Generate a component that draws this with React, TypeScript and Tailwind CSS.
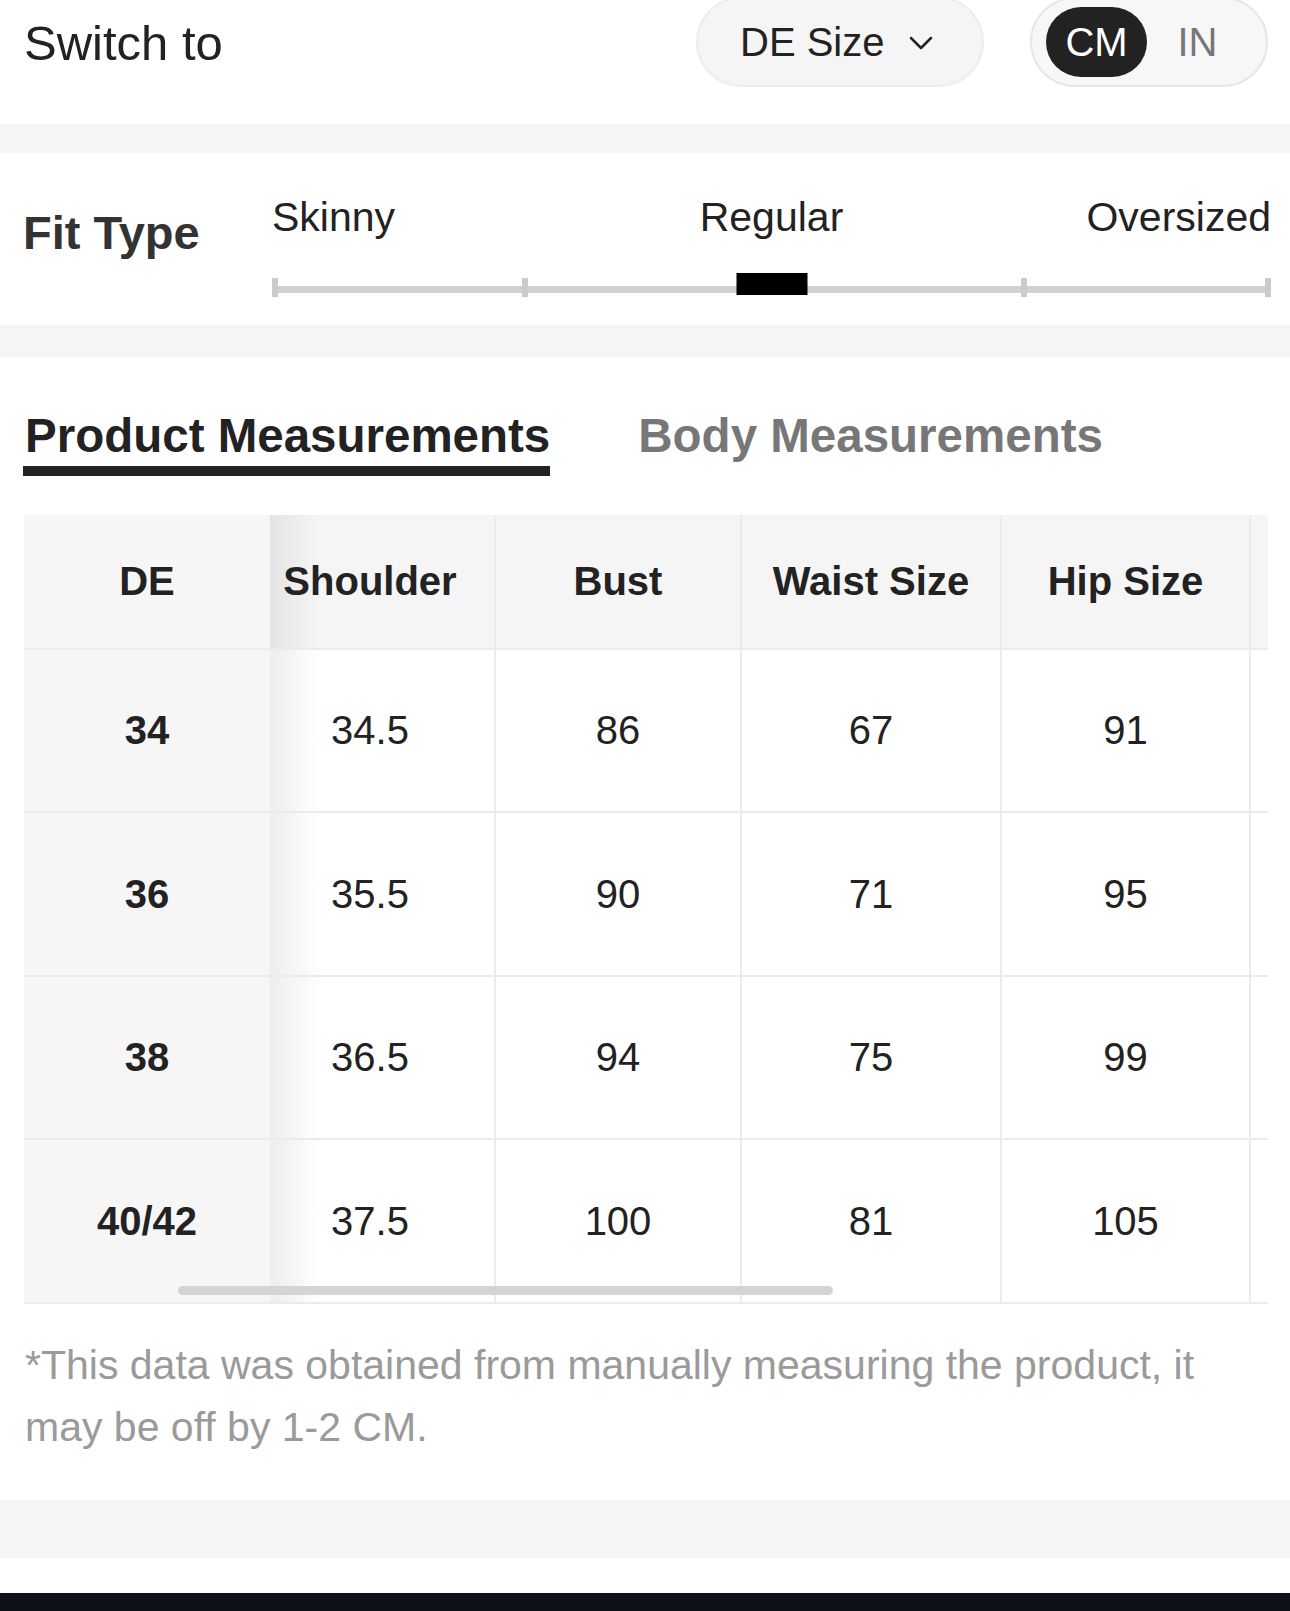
import React from 'react';

const rows = [
    { de: '34', shoulder: '34.5', bust: '86', waist: '67', hip: '91' },
    { de: '36', shoulder: '35.5', bust: '90', waist: '71', hip: '95' },
    { de: '38', shoulder: '36.5', bust: '94', waist: '75', hip: '99' },
    { de: '40/42', shoulder: '37.5', bust: '100', waist: '81', hip: '105' },
];

function Row({ cells, header }: { cells: string[]; header?: boolean }) {
    const weight = header ? 'font-bold' : 'font-normal';
    return (
        <div className={`flex border-b-2 border-[#ebebeb] ${header ? 'h-[135px] bg-[#f5f5f5]' : 'h-[163.5px] bg-white'}`}>
            <div className="w-[246px] flex items-center justify-center bg-[#f6f6f6] font-bold">{cells[0]}</div>
            <div className={`w-[224px] pr-[24px] flex items-center justify-center bg-[linear-gradient(90deg,rgba(0,0,0,0.07),rgba(0,0,0,0)_50px)] ${weight}`}>
                {cells[1]}
            </div>
            <div className={`w-[246px] flex items-center justify-center border-l-2 border-[#ebebeb] ${weight}`}>{cells[2]}</div>
            <div className={`w-[260px] flex items-center justify-center border-l-2 border-[#ebebeb] ${weight}`}>{cells[3]}</div>
            <div className={`w-[249px] flex items-center justify-center border-l-2 border-[#ebebeb] ${weight}`}>{cells[4]}</div>
            <div className="w-[19px] border-l-2 border-[#ebebeb]" />
        </div>
    );
}

export default function App() {
    return (
        <div className="w-[1290px] min-h-[1611px] bg-white font-['Liberation_Sans',Arial,sans-serif] text-[#222] overflow-hidden">
            {/* Switch to */}
            <div className="h-[124px] flex items-start pl-[24px] pr-[22px]">
                <div className="-mt-[3px] h-[90px] w-full flex items-center">
                    <span className="text-[49px] leading-none mt-[2px]">Switch to</span>
                    <div className="ml-auto flex items-center gap-[46px]">
                        <div className="h-[90px] w-[288px] rounded-full bg-[#f5f5f5] border-2 border-[#ededed] flex items-center pl-[42px]">
                            <span className="text-[40px] leading-none">DE Size</span>
                            <svg width="24" height="14" viewBox="0 0 24 14" className="ml-[24px] mt-[2px]">
                                <path d="M2 2 L12 12 L22 2" fill="none" stroke="#222" strokeWidth="2.5" strokeLinecap="round" strokeLinejoin="round" />
                            </svg>
                        </div>
                        <div className="h-[90px] w-[238px] rounded-full bg-[#f7f7f7] border-2 border-[#e6e6e6] flex items-center pl-[14px]">
                            <div className="h-[70px] w-[101px] rounded-full bg-[#222] text-white flex items-center justify-center text-[40px] leading-none">CM</div>
                            <div className="h-[70px] w-[101px] flex items-center justify-center text-[40px] leading-none text-[#777]">IN</div>
                        </div>
                    </div>
                </div>
            </div>

            <div className="h-[29px] bg-[#f5f5f5]" />

            {/* Fit type */}
            <div className="h-[172px] flex pl-[23px] pr-[19px]">
                <div className="w-[249px] pt-[56px] text-[47px] leading-none font-bold text-[#333]">Fit Type</div>
                <div className="flex-1 flex flex-col pt-[44px]">
                    <div className="grid grid-cols-3 text-[41px] leading-none text-[#222]">
                        <span className="text-left">Skinny</span>
                        <span className="text-center">Regular</span>
                        <span className="text-right">Oversized</span>
                    </div>
                    <div className="relative h-[24px] mt-[34px]">
                        <div className="absolute left-0 right-0 top-[14px] h-[7px] bg-[#d0d0d0]" />
                        <div className="absolute left-0 top-[6px] h-[19px] w-[6px] bg-[#cbcbcb]" />
                        <div className="absolute left-[25%] top-[6px] h-[19px] w-[6px] bg-[#cbcbcb]" />
                        <div className="absolute left-[75%] top-[6px] h-[19px] w-[6px] bg-[#cbcbcb]" />
                        <div className="absolute right-0 top-[6px] h-[19px] w-[6px] bg-[#cbcbcb]" />
                        <div className="absolute left-1/2 -translate-x-1/2 top-[1px] h-[22px] w-[71px] bg-black" />
                    </div>
                </div>
            </div>

            <div className="h-[32px] bg-[#f5f5f5]" />

            {/* Tabs */}
            <div className="pt-[55px] pl-[23px] flex items-start gap-[88px]">
                <div className="inline-flex flex-col">
                    <span className="text-[47.5px] leading-none font-bold text-[#222] pl-[2px]">Product Measurements</span>
                    <div className="mt-[6px] h-[10px] w-full bg-[#222]" />
                </div>
                <span className="text-[47.5px] leading-none font-bold text-[#777]">Body Measurements</span>
            </div>

            {/* Table */}
            <div className="relative mt-[39px] ml-[24px] w-[1244px] text-[40px] leading-none">
                <Row header cells={['DE', 'Shoulder', 'Bust', 'Waist Size', 'Hip Size']} />
                {rows.map((r) => (
                    <Row key={r.de} cells={[r.de, r.shoulder, r.bust, r.waist, r.hip]} />
                ))}
                <div className="absolute left-[154px] bottom-[9px] h-[9px] w-[655px] rounded-full bg-[#d4d4d4]" />
            </div>

            <p className="mt-[30px] pl-[25px] max-w-[1225px] text-[41px] leading-[62px] text-[#9a9a9a]">
                *This data was obtained from manually measuring the product, it may be off by 1-2 CM.
            </p>

            <div className="mt-[42px] h-[58px] bg-[#f5f5f5]" />
            <div className="h-[35px] bg-white" />
            <div className="h-[18px] bg-[#0d1117]" />
        </div>
    );
}
